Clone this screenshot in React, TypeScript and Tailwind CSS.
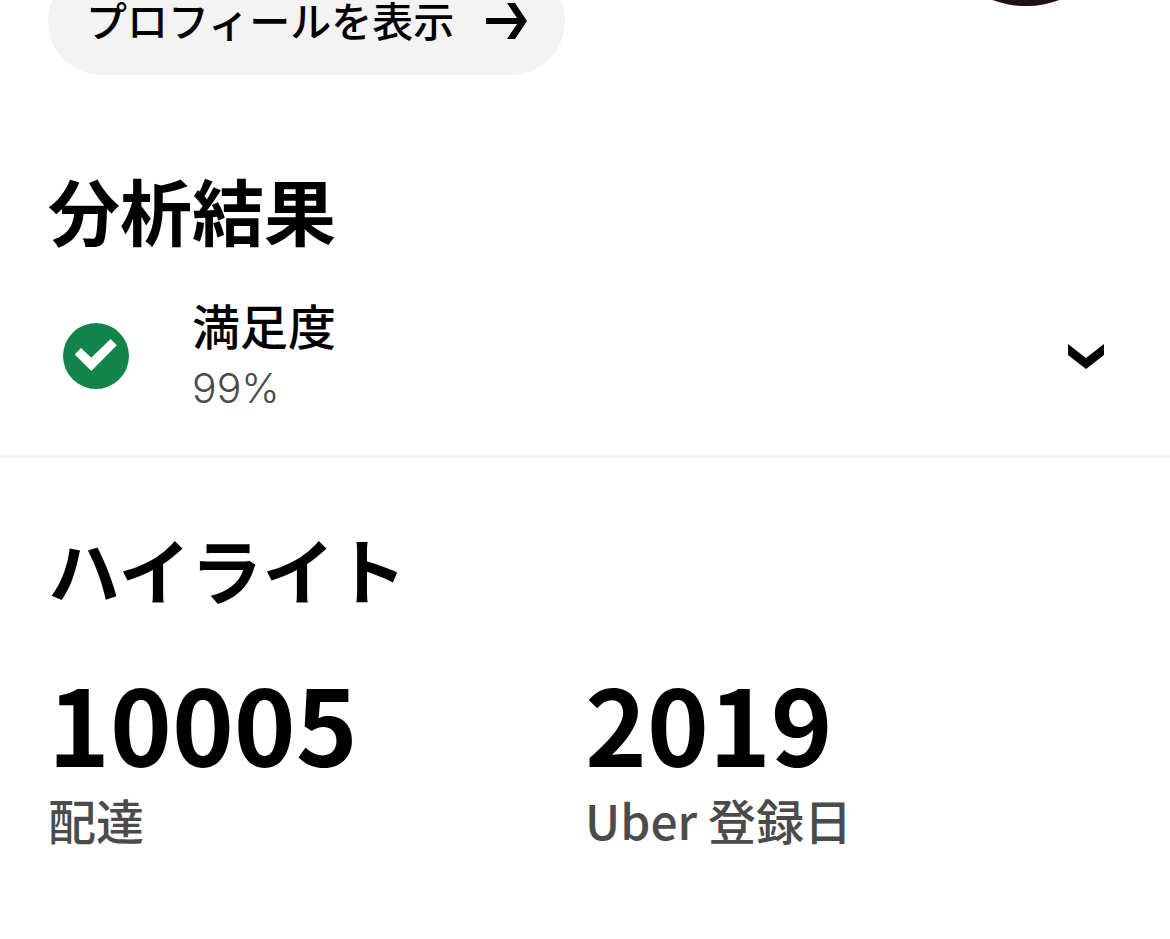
interface Highlight {
  value: string;
  label: string;
}

const highlights: Highlight[] = [
  { value: "10005", label: "配達" },
  { value: "2019", label: "Uber 登録日" },
];

function ArrowIcon() {
  return (
    <svg className="w-[41px] h-9" viewBox="0 0 41 36" aria-hidden="true">
      <path d="M0 15h31L21 0h8l12 18-12 18h-8l10-15H0z" fill="currentColor" />
    </svg>
  );
}

function CheckIcon() {
  return (
    <svg className="w-[66px] h-[66px]" viewBox="0 0 66 66" aria-hidden="true">
      <circle cx="33" cy="33" r="33" fill="#11854a" />
      <path d="M11.7 31.5l6.3-6.5 10.3 9.7 19.2-18.7 6.3 6.2L28.3 48z" fill="#fff" />
    </svg>
  );
}

function ChevronIcon() {
  return (
    <svg className="w-9 h-[25px]" viewBox="0 0 36 25" aria-hidden="true">
      <path d="M0 0l18 14L36 0v11L18 25 0 11z" fill="currentColor" />
    </svg>
  );
}

function Header() {
  return (
    <header className="-mt-[186px] flex justify-between px-12">
      <button
        type="button"
        className="mt-auto flex h-[108px] items-center gap-8 rounded-full bg-[#f3f3f3] px-[38px] text-[41px] font-medium leading-[60px]"
      >
        <span className="pb-1">プロフィールを表示</span>
        <ArrowIcon />
      </button>
      <div className="mb-[69px] h-48 w-48 rounded-full bg-[#201214]" />
    </header>
  );
}

function Insights() {
  return (
    <section className="border-b-[3px] border-[#f3f3f3] pt-[90px]">
      <h2 className="px-12 text-7xl font-bold leading-[88px]">分析結果</h2>
      <button type="button" className="flex w-full items-center gap-12 px-12 pt-[39px] pb-[35px] text-left">
        <span className="flex w-24 justify-center">
          <CheckIcon />
        </span>
        <span className="flex-1">
          <span className="block text-5xl font-medium leading-[64px]">満足度</span>
          <span className="block font-[Inter,sans-serif] text-[41px] font-light leading-[64px] text-[#4b4b4b]">
            99%
          </span>
        </span>
        <span className="flex w-[72px] justify-center">
          <ChevronIcon />
        </span>
      </button>
    </section>
  );
}

function Highlights() {
  return (
    <section className="px-12 pt-[66px] pb-12">
      <h2 className="text-7xl font-bold leading-[88px]">ハイライト</h2>
      <dl className="mt-[57px] grid grid-cols-2">
        {highlights.map((item) => (
          <div key={item.label} className="flex flex-col-reverse gap-3">
            <dt className="text-5xl font-medium leading-[68px] text-[#4b4b4b]">{item.label}</dt>
            <dd className="text-[105px] font-bold leading-[104px]">{item.value}</dd>
          </div>
        ))}
      </dl>
    </section>
  );
}

export default function App() {
  return (
    <main className="flow-root min-h-screen overflow-hidden bg-white font-['Noto_Sans_CJK_JP',sans-serif] text-black" lang="ja">
      <Header />
      <Insights />
      <Highlights />
    </main>
  );
}
